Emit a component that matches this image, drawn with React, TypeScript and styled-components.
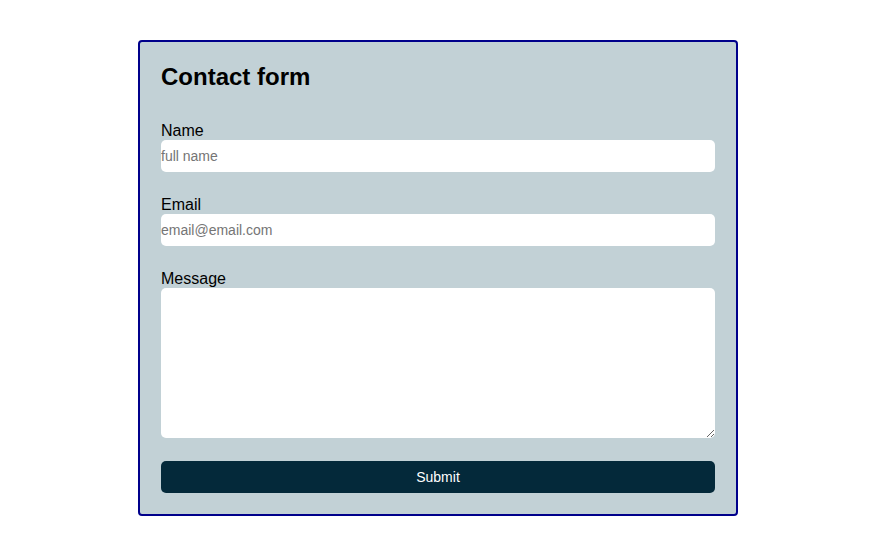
import React from "react";
import styled, { createGlobalStyle } from "styled-components";

const Global = createGlobalStyle`
  html, body { margin: 0; padding: 0; background: #ffffff; }
  body { font-family: "Liberation Sans", Arial, sans-serif; color: #000; }
  * { box-sizing: border-box; }
`;

const Page = styled.div`
  padding: 40px 0 0 138px;
`;

const Card = styled.form`
  width: 600px;
  background: #c2d1d6;
  border: 2px solid #00008b;
  border-radius: 4px;
  padding: 21px;
  display: flex;
  flex-direction: column;
`;

const Title = styled.h2`
  margin: 0 0 31px 0;
  font-size: 24px;
  line-height: 28px;
  font-weight: 700;
`;

const Group = styled.div`
  display: flex;
  flex-direction: column;
  margin-bottom: 24px;
`;

const Label = styled.label`
  font-size: 16px;
  line-height: 18px;
`;

const Input = styled.input`
  height: 32px;
  border: none;
  border-radius: 5px;
  padding: 0;
  font-family: "Liberation Sans", Arial, sans-serif;
  font-size: 14px;
  background: #fff;
  outline: none;
  &::placeholder { color: #757575; }
`;

const TextArea = styled.textarea`
  height: 150px;
  border: none;
  border-radius: 5px;
  padding: 0;
  font-family: "Liberation Sans", Arial, sans-serif;
  font-size: 14px;
  background: #fff;
  outline: none;
  display: block;
`;

const Button = styled.button`
  height: 32px;
  border: none;
  border-radius: 5px;
  background: #04293a;
  color: #fff;
  font-family: "Liberation Sans", Arial, sans-serif;
  font-size: 14px;
  margin-top: -1px;
  cursor: pointer;
`;

export default function App() {
  return (
    <>
      <Global />
      <Page>
        <Card onSubmit={(e) => e.preventDefault()}>
          <Title>Contact form</Title>
          <Group>
            <Label htmlFor="name">Name</Label>
            <Input id="name" type="text" placeholder="full name" />
          </Group>
          <Group>
            <Label htmlFor="email">Email</Label>
            <Input id="email" type="email" placeholder="email@email.com" />
          </Group>
          <Group>
            <Label htmlFor="message">Message</Label>
            <TextArea id="message" />
          </Group>
          <Button type="submit">Submit</Button>
        </Card>
      </Page>
    </>
  );
}
